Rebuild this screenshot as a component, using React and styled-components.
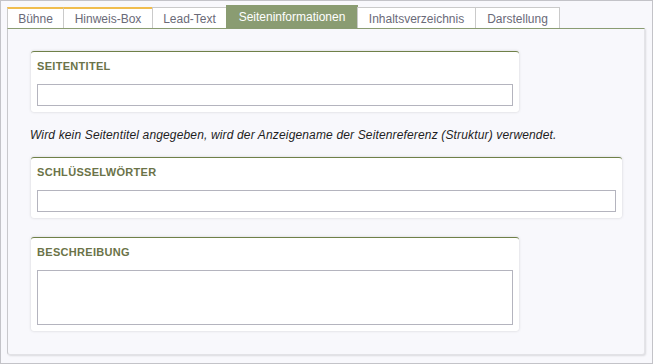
import React from 'react';
import styled, { createGlobalStyle } from 'styled-components';

const GlobalStyle = createGlobalStyle`
  html, body {
    margin: 0;
    padding: 0;
    background: #ffffff;
  }
  body {
    font-family: "Liberation Sans", Arial, sans-serif;
  }
`;

const Frame = styled.div`
  box-sizing: border-box;
  width: 653px;
  height: 364px;
  border: 1px solid #c3c3c8;
  background: #f8f8fc;
  padding: 4px 7px 0 6px;
  display: flex;
  flex-direction: column;
`;

const TabBar = styled.div`
  display: flex;
  align-items: flex-end;
  height: 23px;
  padding-left: 1px;
`;

const Tab = styled.div`
  box-sizing: border-box;
  width: ${(p) => p.$width}px;
  height: ${(p) => (p.$active ? '23px' : '21px')};
  display: flex;
  align-items: center;
  justify-content: center;
  font-size: 12px;
  color: ${(p) => (p.$active ? '#ffffff' : '#6a6a78')};
  background: ${(p) => (p.$active ? '#8a9c72' : '#ffffff')};
  border: 1px solid ${(p) => (p.$active ? '#8a9c72' : '#cacaca')};
  border-top-color: ${(p) => (p.$active ? '#8a9c72' : p.$marked ? '#f0bd4f' : '#cacaca')};
  border-top-width: ${(p) => (p.$marked ? '2px' : '1px')};
  border-bottom: none;
  margin-left: -1px;
  padding-top: ${(p) => (p.$active ? '0' : '1px')};
`;

const Panel = styled.div`
  box-sizing: border-box;
  width: 638px;
  height: 327px;
  border-top: 1px solid #8a9c72;
  border-left: 1px solid #c8c8cc;
  border-right: 1px solid #e4e4e8;
  border-bottom: 1px solid #e2e2e6;
  box-shadow: 1px 1px 2px rgba(0, 0, 0, 0.12);
  border-radius: 0 0 3px 3px;
  background: #f8f8fc;
  padding: 22px 0 0 23px;
  display: flex;
  flex-direction: column;
  align-items: flex-start;
`;

const Card = styled.div`
  box-sizing: border-box;
  width: ${(p) => p.$width}px;
  background: #ffffff;
  border-top: 1px solid #6f8048;
  border-radius: 3px;
  box-shadow: 0 0 3px rgba(0, 0, 0, 0.16);
  padding: 8px 6px 6px 6px;
`;

const CardTitle = styled.div`
  font-size: 11px;
  font-weight: bold;
  color: #6b7348;
  letter-spacing: 0.3px;
  height: 13px;
  line-height: 13px;
  margin-bottom: 11px;
`;

const Field = styled.div`
  box-sizing: border-box;
  height: ${(p) => p.$height}px;
  border: 1px solid #b4b4be;
  background: #ffffff;
`;

const Hint = styled.div`
  font-size: 12px;
  font-style: italic;
  letter-spacing: 0.15px;
  color: #1e1e1e;
  margin: 16px 0 15px -1px;
  line-height: 14px;
`;

const Spacer = styled.div`
  height: ${(p) => p.$h}px;
`;

const tabs = [
  { label: 'Bühne', width: 57, marked: true },
  { label: 'Hinweis-Box', width: 90, marked: true },
  { label: 'Lead-Text', width: 75 },
  { label: 'Seiteninformationen', width: 132, active: true },
  { label: 'Inhaltsverzeichnis', width: 119 },
  { label: 'Darstellung', width: 85 },
];

export default function App() {
  return (
    <>
      <GlobalStyle />
      <Frame>
        <TabBar>
          {tabs.map((t) => (
            <Tab key={t.label} $active={t.active} $marked={t.marked} $width={t.width}>
              {t.label}
            </Tab>
          ))}
        </TabBar>
        <Panel>
          <Card $width={488}>
            <CardTitle>SEITENTITEL</CardTitle>
            <Field $height={22} />
          </Card>
          <Hint>
            Wird kein Seitentitel angegeben, wird der Anzeigename der Seitenreferenz (Struktur) verwendet.
          </Hint>
          <Card $width={591}>
            <CardTitle>SCHLÜSSELWÖRTER</CardTitle>
            <Field $height={22} />
          </Card>
          <Spacer $h={19} />
          <Card $width={488}>
            <CardTitle>BESCHREIBUNG</CardTitle>
            <Field $height={55} />
          </Card>
        </Panel>
      </Frame>
    </>
  );
}
